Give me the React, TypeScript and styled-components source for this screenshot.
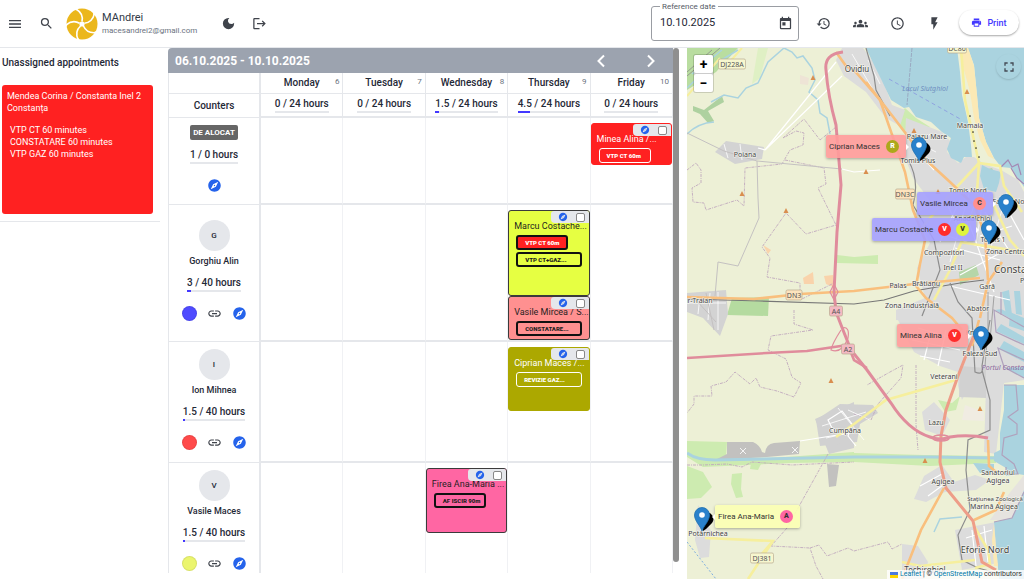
import React from 'react';
import styled, { createGlobalStyle } from 'styled-components';
import {
  MdMenu, MdSearch, MdLogout, MdToday, MdHistory, MdGroups, MdAccessTime, MdDarkMode,
  MdFlashOn, MdPrint, MdExplore, MdLink, MdFullscreen,
} from 'react-icons/md';

const ink = '#1f2937';
const line = '#e5e7eb';
const blue = '#2563eb';
const indigo = '#4338ff';

const GlobalStyle = createGlobalStyle`
  *, *::before, *::after { box-sizing: border-box; }
  body { margin: 0; background: #fff; color: ${ink}; font-family: Roboto, "Liberation Sans", sans-serif; overflow: hidden; }
  button, input { font: inherit; color: inherit; }
  h1, h2, h3, p, ul { margin: 0; padding: 0; font-weight: inherit; font-size: inherit; }
`;

const Page = styled.div`
  display: flex;
  flex-direction: column;
  height: 100vh;
`;

const Header = styled.header`
  display: flex;
  align-items: center;
  justify-content: space-between;
  flex: 0 0 48px;
  padding: 0 5px 0 7px;
  border-bottom: 1px solid ${line};
`;

const Group = styled.div<{ $gap: number }>`
  display: flex;
  align-items: center;
  gap: ${p => p.$gap}px;
`;

const IconButton = styled.button<{ $size?: number; $color?: string }>`
  display: inline-flex;
  align-items: center;
  justify-content: center;
  padding: 0;
  border: 0;
  background: none;
  color: ${p => p.$color ?? '#3f434b'};
  font-size: ${p => p.$size ?? 15}px;
  line-height: 1;
`;

const Account = styled.div`
  display: flex;
  align-items: center;
  gap: 4px;
  width: 140px;
`;

const AccountName = styled.p`
  font-size: 11px;
  line-height: 14px;
  color: #333b47;
`;

const AccountMail = styled.p`
  font-size: 8px;
  line-height: 11px;
  color: #6b7280;
`;

const DateField = styled.fieldset`
  display: flex;
  align-items: center;
  width: 148px;
  min-width: 0;
  height: 39px;
  margin: 0 0 4px;
  padding: 0 5px 5px 8px;
  border: 1px solid #9a9da3;
  border-radius: 3px;

  legend {
    padding: 0 2px;
    font-size: 8px;
    line-height: 9px;
    color: #555b66;
  }
`;

const DateInput = styled.input`
  flex: 1;
  width: 100%;
  min-width: 0;
  padding: 0;
  border: 0;
  outline: 0;
  background: none;
  font-size: 11px;
  line-height: 14px;
`;

const DateBody = styled.div`
  display: flex;
  align-items: center;
  width: 100%;
`;

const PrintButton = styled.button`
  display: flex;
  align-items: center;
  justify-content: center;
  gap: 5px;
  width: 60px;
  height: 25px;
  margin-bottom: 2px;
  padding: 0;
  border: 0;
  border-radius: 13px;
  background: #fff;
  box-shadow: 0 1px 2px rgba(0, 0, 0, .35);
  color: ${indigo};
  font-size: 9px;
  font-weight: 500;

  svg { font-size: 11px; }
`;

const Main = styled.main`
  display: grid;
  grid-template-columns: 160px minmax(0, 511fr) minmax(0, 337fr);
  column-gap: 8px;
  flex: 1;
  min-height: 0;
`;

const Sidebar = styled.aside`
  align-self: start;
  padding: 8px 7px 7px 2px;
  border-bottom: 1px solid ${line};
`;

const SidebarTitle = styled.h2`
  margin-bottom: 16px;
  font-size: 10px;
  font-weight: 500;
  line-height: 13px;
`;

const PendingCard = styled.article`
  min-height: 129px;
  padding: 5px;
  border-radius: 3px;
  background: #ff2121;
  color: #fff;
  font-size: 9px;
  line-height: 12px;

  ul { margin: 10px 0 0 3px; list-style: none; }
`;

const Scheduler = styled.section`
  position: relative;
  display: flex;
  flex-direction: column;
  min-height: 0;
  margin-bottom: 6px;
  padding-right: 6px;
  overflow: hidden;
`;

const ScrollThumb = styled.div`
  position: absolute;
  top: 0;
  right: 0;
  bottom: 11px;
  width: 6px;
  border-radius: 3px;
  background: #8f8f8f;
`;

const RangeBar = styled.div`
  display: flex;
  align-items: center;
  justify-content: space-between;
  flex: 0 0 25px;
  padding: 0 15px 0 7px;
  border-radius: 4px 0 0 0;
  background: #9ca3af;
  color: #fff;
  font-size: 12px;
  font-weight: 700;
`;

const Table = styled.table`
  width: 100%;
  border-spacing: 0;
  table-layout: fixed;
  border-left: 1px solid ${line};
`;

const Corner = styled.th<{ $height: number }>`
  width: 92px;
  height: ${p => p.$height}px;
  padding: 0;
  border-right: 2px solid ${line};
  border-bottom: 1px solid ${line};
  font-size: 10px;
  font-weight: 500;
`;

const DayHead = styled.th`
  padding: 0;
  border-right: 1px solid ${line};
  border-bottom: 1px solid ${line};
  font-size: 10px;
  font-weight: 500;

  div { position: relative; line-height: 18px; }
  span { position: absolute; top: -1px; right: 3px; font-size: 8px; font-weight: 400; color: #6b7280; }
`;

const TotalCell = styled.td`
  padding: 0;
  border-right: 1px solid ${line};
  border-bottom: 2px solid ${line};
`;

const RowHead = styled.th<{ $height: number }>`
  height: ${p => p.$height}px;
  padding: 0 0 5px;
  border-right: 2px solid ${line};
  border-bottom: 1px solid ${line};
  font-weight: 500;
`;

const Slot = styled.td`
  padding: 5px 0 0;
  border-right: 1px solid #f0f1f4;
  border-bottom: 2px solid ${line};
  vertical-align: top;
`;

const Stack = styled.div`
  display: flex;
  flex-direction: column;
  align-items: center;
`;

const HoursBox = styled.div`
  width: fit-content;
  margin: 0 auto;
  font-size: 10px;
  font-weight: 500;
  line-height: 13px;
`;

const Track = styled.div`
  height: 2px;
  margin-top: 1px;
  background: ${line};
`;

const Fill = styled.div`
  height: 2px;
  background: ${indigo};
`;

const Badge = styled.span`
  padding: 0 3px;
  margin-bottom: 8px;
  border-radius: 2px;
  background: #666;
  color: #fff;
  font-size: 8px;
  font-weight: 700;
  line-height: 15px;
`;

const Avatar = styled.span`
  display: flex;
  align-items: center;
  justify-content: center;
  width: 31px;
  height: 31px;
  margin-bottom: 4px;
  border-radius: 50%;
  background: ${line};
  font-size: 8px;
`;

const WorkerName = styled.span`
  margin-bottom: 9px;
  font-size: 9px;
  line-height: 12px;
`;

const Actions = styled.div`
  display: flex;
  align-items: center;
  justify-content: center;
  gap: 10px;
  margin-top: 14px;
`;

const Swatch = styled.button<{ $color: string }>`
  width: 15px;
  height: 15px;
  padding: 0;
  border: 1px solid rgba(0, 0, 0, .08);
  border-radius: 50%;
  background: ${p => p.$color};
`;

const Event = styled.article<{ $bg: string; $height: number; $light?: boolean }>`
  position: relative;
  height: ${p => p.$height}px;
  padding: 9px 4px 0 5px;
  border: 1px solid ${p => (p.$light ? p.$bg : '#3b3b3b')};
  border-radius: 3px;
  background: ${p => p.$bg};
  color: ${p => (p.$light ? '#fff' : '#1f1f1f')};
`;

const EventTools = styled.div`
  position: absolute;
  top: 0;
  right: 0;
  display: flex;
  align-items: center;
  justify-content: flex-end;
  gap: 8px;
  width: 38px;
  height: 12px;
  padding-right: 4px;
  border-radius: 3px 2px 0 4px;
  background: ${line};
`;

const Tick = styled.input`
  appearance: none;
  width: 9px;
  height: 9px;
  margin: 0;
  border: 1px solid #888;
  border-radius: 2px;
  background: #fff;
`;

const EventTitle = styled.h3`
  margin-bottom: 3px;
  font-size: 9px;
  line-height: 12px;
  white-space: nowrap;
`;

const Tag = styled.div<{ $light?: boolean; $bg?: string; $wide?: boolean }>`
  width: ${p => (p.$wide ? 66 : 52)}px;
  margin: 0 0 2px 2px;
  padding-left: 7px;
  border: ${p => (p.$light ? '1px solid #fff' : '2px solid #111')};
  border-radius: 3px;
  background: ${p => p.$bg ?? 'transparent'};
  color: ${p => (p.$bg ? '#fff' : 'inherit')};
  font-size: 6px;
  font-weight: 900;
  line-height: ${p => (p.$light ? 13 : 11)}px;
  white-space: nowrap;
`;

const MapPanel = styled.section`
  position: relative;
  overflow: hidden;
  background: #edf0d6;
`;

const MapArt = styled.svg`
  position: absolute;
  inset: 0;
  width: 100%;
  height: 100%;
`;

const Pin = styled.div<{ $x: number; $y: number }>`
  position: absolute;
  left: ${p => p.$x}px;
  top: ${p => p.$y}px;
  width: 0;
  height: 0;

  > svg { position: absolute; left: -8px; bottom: 0; }
`;

const PinLabel = styled.div<{ $bg: string; $right?: boolean; $width: number }>`
  position: absolute;
  top: -27px;
  ${p => (p.$right ? 'left' : 'right')}: 13px;
  display: flex;
  align-items: center;
  justify-content: space-between;
  width: ${p => p.$width}px;
  height: 23px;
  padding: 0 7px 0 3px;
  border-radius: 2px;
  background: ${p => p.$bg};
  box-shadow: 0 1px 3px rgba(0, 0, 0, .3);
  color: #333;
  font-size: 8px;
  white-space: nowrap;

  &::after {
    content: '';
    position: absolute;
    top: 9px;
    ${p => (p.$right ? 'right' : 'left')}: 100%;
    border: 3px solid transparent;
    border-${p => (p.$right ? 'right' : 'left')}-color: #fff;
  }
`;

const Dots = styled.span`
  display: flex;
  gap: 5px;
`;

const Dot = styled.span<{ $bg: string; $fg?: string }>`
  width: 13px;
  border-radius: 50%;
  background: ${p => p.$bg};
  color: ${p => p.$fg ?? '#fff'};
  font-size: 7px;
  font-weight: 900;
  line-height: 13px;
  text-align: center;
`;

const ZoomControl = styled.div`
  position: absolute;
  top: 7px;
  left: 7px;
  display: flex;
  flex-direction: column;
  gap: 1px;
  border-radius: 2px;
  background: #ccc;
  box-shadow: 0 0 0 1px rgba(0, 0, 0, .15);

  button {
    width: 19px;
    height: 18px;
    padding: 0;
    border: 0;
    border-radius: 2px;
    background: #fff;
    color: #000;
    font-size: 14px;
    font-weight: 700;
    line-height: 18px;
  }
`;

const FullscreenButton = styled.button`
  position: absolute;
  top: 6px;
  right: 3px;
  display: flex;
  align-items: center;
  justify-content: center;
  width: 25px;
  height: 25px;
  padding: 0;
  border: 0;
  border-radius: 50%;
  background: #aad3df;
  box-shadow: 0 1px 2px rgba(0, 0, 0, .15);
  color: #444b55;
  font-size: 16px;
`;

const Attribution = styled.p`
  position: absolute;
  right: 0;
  bottom: 0;
  display: flex;
  align-items: center;
  gap: 2px;
  padding: 0 2px 0 3px;
  background: rgba(255, 255, 255, .8);
  color: #333;
  font-size: 7px;
  line-height: 9px;
  white-space: nowrap;

  a { color: #0078a8; text-decoration: none; }
`;

const Logo = () => (
  <svg width="32" height="32" viewBox="-16 -16 32 32" aria-hidden="true">
    <circle r="15.5" fill="#ebb71c" />
    <circle r="2.600" fill="#fff" />
    {[0, 72, 144, 216, 288].map(a => (
      <g key={a} transform={`rotate(${a})`}>
        <path d="M0-2.500C1-7-1-12-6-15" fill="none" stroke="#fff" strokeWidth="1.600" />
        <path d="M-5-16.500L-9-15L-5.500-14.200Z" fill="#fff" stroke="#fff" />
      </g>
    ))}
  </svg>
);

const Chevron = ({ forward }: { forward?: boolean }) => (
  <svg width="14" height="14" viewBox="0 0 14 14" aria-hidden="true">
    <path d={forward ? 'M4 1.500L9.500 7L4 12.500' : 'M10 1.500L4.500 7L10 12.500'} fill="none" stroke="currentColor" strokeWidth="2" />
  </svg>
);

const Hours = ({ text, share }: { text: string; share: number }) => (
  <HoursBox>
    {text}
    <Track><Fill style={{ width: `${share}%` }} /></Track>
  </HoursBox>
);

type Job = { label: string; bg?: string; wide?: boolean };
type Appt = { id: string; title: string; bg: string; height: number; light?: boolean; jobs: Job[] };

const Appointment = ({ a }: { a: Appt }) => (
  <Event $bg={a.bg} $height={a.height} $light={a.light}>
    <EventTitle>{a.title}</EventTitle>
    {a.jobs.map(j => (
      <Tag key={j.label} $light={a.light} $bg={j.bg} $wide={j.wide}>{j.label}</Tag>
    ))}
    <EventTools>
      <IconButton $size={10} $color={blue} aria-label={`Locate ${a.id}`}><MdExplore /></IconButton>
      <Tick type="checkbox" aria-label={`Select ${a.id}`} />
    </EventTools>
  </Event>
);

const days = [
  { name: 'Monday', n: 6, total: '0 / 24 hours', share: 0 },
  { name: 'Tuesday', n: 7, total: '0 / 24 hours', share: 0 },
  { name: 'Wednesday', n: 8, total: '1.5 / 24 hours', share: 6 },
  { name: 'Thursday', n: 9, total: '4.5 / 24 hours', share: 19 },
  { name: 'Friday', n: 10, total: '0 / 24 hours', share: 0 },
];

const workers: { name?: string; total: string; share: number; color?: string; height: number; slots: Record<number, Appt[]> }[] = [
  {
    total: '1 / 0 hours', share: 0, height: 87,
    slots: { 4: [{ id: 'Minea Alina', title: 'Minea Alina /...', bg: '#ff2121', height: 42, light: true, jobs: [{ label: 'VTP CT 60m' }] }] },
  },
  {
    name: 'Gorghiu Alin', total: '3 / 40 hours', share: 8, color: '#4f4bff', height: 137,
    slots: {
      3: [
        { id: 'Marcu Costache', title: 'Marcu Costache...', bg: '#e6ff42', height: 86, jobs: [{ label: 'VTP CT 60m', bg: '#ff2121' }, { label: 'VTP CT+GAZ...', wide: true }] },
        { id: 'Vasile Mircea', title: 'Vasile Mircea / S...', bg: '#ff9090', height: 44, jobs: [{ label: 'CONSTATARE...', wide: true }] },
      ],
    },
  },
  {
    name: 'Ion Mihnea', total: '1.5 / 40 hours', share: 4, color: '#ff4a4a', height: 121,
    slots: { 3: [{ id: 'Ciprian Maces', title: 'Ciprian Maces /...', bg: '#aca800', height: 64, light: true, jobs: [{ label: 'REVIZIE GAZ...', wide: true }] }] },
  },
  {
    name: 'Vasile Maces', total: '1.5 / 40 hours', share: 4, color: '#ebf56e', height: 121,
    slots: { 2: [{ id: 'Firea Ana-Maria', title: 'Firea Ana-Maria ...', bg: '#ff66a3', height: 65, jobs: [{ label: 'AF ISCIR 90m' }] }] },
  },
];

const places: [string, number, number, number][] = [
  ['Ovidiu', 857, 72, 8], ['Poiana', 745, 157, 7], ['Mamaia', 970, 128, 7], ['Palazu Mare', 927, 139, 7],
  ['Tomis Plus', 918, 163, 7], ['Tomis Nord', 968, 193, 7], ['Faleza Nord', 1012, 204, 7], ['Anadalchioi', 973, 221, 7],
  ['Tomis 1', 993, 242, 7], ['Zona Centrala', 1009, 254, 7], ['Compozitori', 944, 255, 7], ['Inel II', 953, 270, 7],
  ['Constanța', 1018, 273, 10], ['Palas', 898, 288, 7], ['Brătianu', 926, 286, 7], ['Gară', 987, 289, 7],
  ['Zona Industrială', 912, 308, 7], ['Abator', 978, 311, 7], ['Port', 1027, 283, 7], ['Valur-Traian', 693, 303, 7],
  ['Km 5', 974, 335, 7], ['Faleza Sud', 980, 356, 7], ['Veterani', 944, 379, 7], ['Cumpăna', 845, 433, 7],
  ['Lazu', 936, 425, 7], ['Agigea', 943, 484, 7], ['Sanatoriul', 998, 475, 7], ['Agigea', 998, 483, 7],
  ['Stațiunea Zoologică', 995, 501, 6], ['Marină Agigea', 994, 509, 7], ['Eforie Nord', 985, 553, 9],
  ['Techirghiol', 925, 573, 8], ['Potârnichea', 708, 536, 7],
];

const shields: [string, number, number, number, string][] = [
  ['DJ228A', 732, 64, 27, '#f7f7cf'], ['DN3', 794, 295, 16, '#fde3bd'], ['DN3C', 905, 194, 19, '#fde3bd'],
  ['A4', 836, 311, 13, '#f3b8c2'], ['A2', 848, 349, 13, '#f3b8c2'], ['DJ381', 762, 558, 23, '#f7f7cf'], ['DC86', 957, 48, 19, '#f7f7cf'],
];

const peaks = [[813, 78], [742, 194], [786, 211], [967, 92], [866, 172], [914, 131], [831, 381], [925, 461], [980, 409], [938, 192]];

const MapDrawing = () => (
  <MapArt viewBox="687 48 337 531" preserveAspectRatio="xMinYMin slice" aria-hidden="true">
    {/* woods and meadows */}
    <g fill="#cdebb0">
      <path d="M687 48H738L716 72L687 90Z" fill="#b9dda0" />
      <path d="M693 106L704 110L722 96L724 102L708 111L714 121L708 123L700 114L693 111Z" fill="#aed1a0" />
      <path d="M687 441L727 442L726 458L746 460L854 452V462L790 463L703 467L687 457Z" />
      <path d="M687 466L703 472L712 487L701 498L687 499Z" />
      <path d="M732 474L742 473L741 489L743 497L736 498L731 484Z" />
      <path d="M751 463L761 464L758 470L750 469Z" />
      <path d="M837 255L854 257L878 255V264L837 263Z" />
      <path d="M732 298L769 297L768 316L727 315Z" fill="#b5dba0" />
      <path d="M854 453L924 455L996 456V463L930 466L854 462Z" />
      <path d="M894 120L905 108L916 118L930 127L924 133L902 130Z" />
      <path d="M938 400L952 403L960 396L956 410L945 412Z" />
      <path d="M758 48L768 48L760 78L752 84Z" fill="#dff0c4" />
    </g>
    {/* built-up ground */}
    <g fill="#dcdcdc">
      <path d="M715 152L726 141L764 147L762 159L735 164Z" fill="#d3d3d3" />
      <path d="M687 293L726 290L728 314L720 336L703 318L687 312Z" fill="#d3d3d3" />
      <path d="M842 48H863L879 70L892 105L905 110L900 126L886 118L866 92L844 76L836 60Z" />
      <path d="M906 118L942 132L951 142L947 152L958 163L966 157H974L984 164L1001 170L1018 180L1024 192V340H952L928 322L896 320L896 310L925 298L917 268L930 243L915 213L934 206L913 178L904 155Z" />
      <path d="M898 320L984 320L1024 326V380L1004 383L996 454L984 452L986 386L970 385L962 400L958 386L958 372L940 366L914 352Z" />
      <path d="M922 412L934 402L950 420L942 436L925 430Z" />
      <path d="M815 419L854 402V448L829 454Z" fill="#d1d1d1" />
      <path d="M840 404L873 405L878 413L860 424L857 442L820 446L816 420Z" fill="#d1d1d1" />
      <path d="M924 476L942 465L954 482L975 475L990 480L976 490L945 492L926 502L914 499Z" />
      <path d="M955 530L996 522L998 563L962 570Z" />
      <path d="M902 544L918 546L928 562L924 579H902Z" />
      <path d="M698 505L711 531L709 557L700 558L695 540Z" />
      <path d="M1004 500L1024 475V500L1012 520L990 520Z" fill="#e6e3df" />
      <path d="M960 366L986 368V398L959 397Z" fill="#d1d1d1" />
    </g>
    <path d="M959 272L976 265L979 275L960 285ZM984 170L992 168L996 176L988 184Z" fill="#b5d6a8" />
    <g fill="#c2c1bf">
      <path d="M727 442L753 442Q760 445 762 452L765 453Q766 444 774 443L800 441L799 454L767 457L715 460L727 454Z" />
      <path d="M827 464L839 465L836 486L829 487Z" />
    </g>
    <g fill="#f3e1c4">
      <path d="M803 278L813 272L814 284L804 284Z" fill="#f9d3ab" />
      <path d="M824 276L833 275V287L826 284Z" fill="#f9d3ab" />
      <path d="M763 245L771 250L768 254Z" fill="#f9d3ab" />
      <path d="M800 75L809 78L808 85L800 84Z" fill="#eee4d6" />
      <path d="M965 405L984 412V421L962 420Z" fill="#f0ece2" />
    </g>
    {/* sea, lakes and harbour */}
    <g fill="#aad3df">
      <path d="M866 48L874 65L882 81L891 100L904 108L909 107L916 117L931 122L942 132L951 138L947 149L951 158L961 163L964 157H972L971 145L968 122L962 95L960 72L957 48Z" />
      <path d="M968 48L974 65L977 95L979 118L986 142L994 158L1001 167L1011 168L1017 177L1024 187V48Z" />
      <path d="M982 165L990 169L1001 172L999 183L996 192L984 189L980 176Z" />
      <path d="M1004 385H1024V475L1018 474L1006 476V468L994 461V453L1000 450V433L1004 410Z" />
      <path d="M1024 490L1012 518L994 522L996 545L999 579H1024Z" />
      <path d="M973 463L994 464V472L980 473Z" />
      <path d="M995 310L1024 326V320L1001 309ZM996 331L1024 344V337L1001 324ZM999 349L1024 362V352L1004 341ZM1005 368L1024 378V367Z" />
      <path d="M1002 292L1009 290L1012 315L1006 315ZM1014 291H1020L1022 315L1016 314Z" />
      <path d="M1009 326L1024 331V318L1010 312Z" />
    </g>
    <g fill="none" stroke="#b0a2bd" strokeWidth="1.200">
      <path d="M1004 385H1016L1018 410L1008 417L1017 424V434L1004 438L1002 455L1014 464L1018 474H1006V467" />
      <path d="M1001 167L1008 160L1012 167L1018 164L1021 175M1011 168L1017 178L1024 184" stroke="#a489b5" />
      <path d="M1024 378L1004 367L998 348L1024 360M1024 345L996 332L994 310L1024 327M1001 292V315" />
      <path d="M994 522L1012 518L1024 492" />
    </g>
    <path d="M958 48H968L974 66L977 95L979 118L986 142L994 159L988 156L980 140L974 118L970 92Z" fill="#fbe9b5" />
    <path d="M994 524L996 548L998 566L994 566L992 540Z" fill="#fbe9b5" />
    <g fill="none" stroke="#aad3df">
      <path d="M687 453Q696 460 715 460L854 457L931 457L994 458" strokeWidth="3" />
      <path d="M711 102L724 95L738 98L746 88L758 83L768 62L784 48L792 52L797 58L803 56L812 68L815 80L809 92L818 100L820 113L827 118L830 134" strokeWidth="1.500" />
      <path d="M687 134Q698 123 714 122" strokeWidth="1.500" />
      <path d="M934 532L940 519L962 517" strokeWidth="1.500" />
      <path d="M687 88L708 68L738 50M692 74L722 50" strokeWidth="1.500" />
    </g>
    {/* parish borders and tracks */}
    <g fill="none" stroke="#bfa8bd" strokeWidth=".9" strokeDasharray="3 1 1 1">
      <path d="M687 170L696 163L701 170V183L692 188L693 202L704 203L706 210L737 200L744 206L745 168L782 164L790 150L803 145L804 133L796 131L783 138" />
      <path d="M785 160L824 168L826 184L818 188L836 225L806 234L786 213L762 247L770 258L767 277L800 283V300L836 282" />
      <path d="M783 138L804 119L820 140L836 127" />
      <path d="M794 310V324L813 330L771 336L768 350L786 359L792 377L801 383L794 397L777 391L760 387L756 378L750 384L735 372L726 382L711 386L712 396H694V404L687 413" />
      <path d="M828 454L787 528L771 546L810 548L816 566L823 579M810 548L819 545L827 556L848 548L854 551" />
      <path d="M687 465L703 465L727 464L742 467L752 462L792 465L854 462" />
      <path d="M854 414L871 420L878 404L901 378L903 365L890 372L867 385M916 365V425L918 450" />
      <path d="M854 551L888 542L892 549L902 544" />
    </g>
    <path d="M889 79L962 120" stroke="#8c9de0" strokeWidth=".9" strokeDasharray="4 3" />
    <path d="M687 542L716 579" stroke="#7eaee0" strokeDasharray="2 2" />
    <path d="M912 48L907 105" stroke="#9298b5" strokeWidth=".7" strokeDasharray="4 1" />
    {/* street grid */}
    <g fill="none" stroke="#fff" strokeWidth="1.200">
      <path d="M836 62L765 150L842 76M842 169L854 172L880 170M758 148L765 150M800 441L850 433M834 432L828 420L842 411L852 424L848 436L856 446" />
      <path d="M940 242L960 200M948 206L964 240M925 160L934 170M968 220L994 292M955 248L1000 260M985 212L1010 252M1000 196L1024 240M960 275L1002 252M976 200L964 236M936 232L990 250M980 236L1012 226M950 286L1010 300M912 340L960 350M918 328L960 340M920 356L950 362M930 336L924 360M946 330L938 366M966 538L992 530M964 552H994M972 530L976 566M984 526L988 562M920 486L942 474M928 496L950 480" />
      <path d="M970 190L950 262M984 192L976 244M1008 190L990 250M920 144L936 152M916 150L930 134M868 60L880 84M852 54L872 88M848 410L870 420M838 408L864 440M822 426L866 412M826 438L862 430M700 296L698 314M710 293L708 320M718 292V330M687 303H726M724 144L728 158M740 144L742 160" strokeWidth=".8" />
    </g>
    <g fill="none" stroke="#c4c1c1" strokeWidth="1">
      <path d="M687 133L724 151L757 161L758 198L759 218L738 266L718 262L715 296M757 161L842 169" />
      <path d="M700 298H726M706 293L714 330M696 300L716 322" />
    </g>
    {/* railways */}
    <g fill="none" stroke="#8c8c8c" strokeWidth="1.200">
      <path d="M687 299L760 301L854 304L884 300L914 291L960 283L984 280" stroke="#777" />
      <path d="M866 48L874 76L876 90L890 116M908 160Q920 180 913 205L934 240L940 270L922 316" />
      <path d="M950 283L958 302L972 318L975 372Q984 376 982 366L986 340L990 320M982 370L990 400L990 430L968 440L966 470L970 510L958 535L962 560L978 568L1000 574" />
      <path d="M988 292V330L985 366M994 296L990 340" strokeWidth="1" stroke="#a2a2a2" />
      <path d="M687 72L712 50M687 76L720 48" strokeWidth=".8" />
    </g>
    {/* county and national roads */}
    <g fill="none" stroke="#f6ef9d" strokeWidth="2.600">
      <path d="M961 48L965 100L979 163L1000 166L1004 186L1022 212" />
      <path d="M979 163L952 192L915 236M979 163L976 206L950 270L934 300M990 196L1010 240L1024 256M960 242L1024 252" />
      <path d="M836 437L854 424L886 400L956 380" />
      <path d="M705 538L773 541L748 579M773 541L760 556" />
      <path d="M974 526L988 550L990 564L975 568M902 562L920 566L975 560" />
      <path d="M687 96L720 58M742 48L726 66" strokeWidth="2" />
    </g>
    <g fill="none" stroke="#f9bf7d" strokeWidth="2.600">
      <path d="M687 297L754 299L800 294L854 291L914 284L980 278" />
      <path d="M854 70L880 100L905 172L913 210L925 240L920 264L916 286L926 298L952 318L962 330" />
      <path d="M836 52L846 66L857 72M866 82L894 118L926 160L950 182L975 206L985 236L988 280" />
      <path d="M979 320L972 346M1002 262L988 282L980 318" />
      <path d="M944 488L921 530L902 579" />
      <path d="M988 440L989 466L996 472M1004 492L996 510L974 520" />
    </g>
    <g fill="none" stroke="#ee9d88" strokeWidth="3">
      <path d="M976 330L958 376L946 410L941 436L940 462L946 488L973 521L982 562L996 570" />
    </g>
    {/* motorways */}
    <g fill="none" stroke="#e08c9c">
      <path d="M843 52Q824 54 826 70Q828 96 836 125L841 185L837 232L834 292L836 312" strokeWidth="3" />
      <path d="M836 312L843 330L851 350L867 370L891 403Q908 430 930 437Q940 441 950 437Q968 434 988 438" strokeWidth="3" />
      <path d="M687 358L767 353L807 351L848 345L854 360L867 368" strokeWidth="2.600" />
      <path d="M841 330Q832 344 831 350Q842 354 848 338Q850 326 842 328M834 284L830 292L834 300L838 292Z" strokeWidth="1.200" />
      <ellipse cx="941" cy="438" rx="8" ry="3" strokeWidth="1.500" />
    </g>
    <g fill="#d98e4f">
      {peaks.map(([x, y]) => <path key={`${x}-${y}`} d={`M${x} ${y - 3}l2.500 5h-5z`} />)}
    </g>
    <g stroke="#222" strokeWidth="1.600" strokeLinecap="round">
      <path d="M970 116v.1M973 132v.1M974 141v.1M976 148v.1M979 157v.1" />
    </g>
    <g stroke="#f4f4f4" strokeWidth="1">
      <path d="M740 448l6 6M746 448l-6 6M792 447l6 6M798 447l-6 6" />
    </g>
    <g fontFamily='"Noto Sans", sans-serif' textAnchor="middle">
      <text x="925" y="91" fontSize="7" fontStyle="italic" fill="#6f8fc0">Lacul Siutghiol</text>
      <text x="1008" y="370" fontSize="7" fontStyle="italic" fill="#8d6a9e">Portul Constanța</text>
      <g fill="#444" stroke="#f5f5ee" strokeWidth="1.200" paintOrder="stroke">
        {places.map(([name, x, y, size]) => <text key={`${name}${y}`} x={x} y={y} fontSize={size}>{name}</text>)}
      </g>
      {shields.map(([name, x, y, w, fill]) => (
        <g key={name}>
          <rect x={x - w / 2} y={y - 5} width={w} height="10" rx="1.500" fill={fill} stroke="#b9ab90" strokeWidth=".7" />
          <text x={x} y={y + 3} fontSize="7" fill="#555">{name}</text>
        </g>
      ))}
    </g>
  </MapArt>
);

const PinIcon = () => (
  <svg width="28" height="27" viewBox="-8 -27 28 27" aria-hidden="true">
    <path d="M1-1L4-3L10-9Q13-13 10-17Q8-20 4-19L0-8Z" fill="#000" />
    <path d="M0-1C-1.500-6-7.500-11-7.500-17A7.500 7.500 0 0 1 7.500-17C7.500-11 1.500-6 0-1Z" fill="#2a81cb" stroke="#1d6fae" strokeWidth=".8" />
    <circle cy="-17" r="2.800" fill="#fff" />
  </svg>
);

type Marker = { name: string; x: number; y: number; bg: string; width: number; right?: boolean; dots: [string, string, string?][] };
const markers: Marker[] = [
  { name: 'Ciprian Maces', x: 232, y: 114, bg: 'rgba(255,155,155,.9)', width: 80, dots: [['R', '#aca81a']] },
  { name: 'Vasile Mircea', x: 319, y: 171, bg: 'rgba(164,160,255,.9)', width: 76, dots: [['C', '#ff9090', '#333']] },
  { name: 'Marcu Costache', x: 302, y: 197, bg: 'rgba(164,160,255,.9)', width: 104, dots: [['V', '#ff2c2c'], ['V', '#e0f53c', '#333']] },
  { name: 'Minea Alina', x: 294, y: 303, bg: 'rgba(255,155,155,.9)', width: 71, dots: [['V', '#ff2c2c']] },
  { name: 'Firea Ana-Maria', x: 15, y: 484, bg: 'rgba(251,255,180,.9)', width: 85, right: true, dots: [['A', '#ff66a3', '#333']] },
];

export default function App() {
  return (
    <Page>
      <GlobalStyle />
      <Header>
        <Group $gap={15}>
          <Group $gap={12}>
            <Group $gap={16}>
              <IconButton $size={16} aria-label="Menu"><MdMenu /></IconButton>
              <IconButton aria-label="Search"><MdSearch /></IconButton>
            </Group>
            <Account>
              <Logo />
              <div>
                <AccountName>MAndrei</AccountName>
                <AccountMail>macesandrei2@gmail.com</AccountMail>
              </div>
            </Account>
          </Group>
          <Group $gap={16}>
            <IconButton aria-label="Dark mode"><MdDarkMode /></IconButton>
            <IconButton aria-label="Log out"><MdLogout /></IconButton>
          </Group>
        </Group>
        <Group $gap={17}>
          <DateField>
            <legend><label htmlFor="reference-date">Reference date</label></legend>
            <DateBody>
              <DateInput id="reference-date" defaultValue="10.10.2025" />
              <IconButton aria-label="Choose date"><MdToday /></IconButton>
            </DateBody>
          </DateField>
          <Group $gap={22}>
            <IconButton aria-label="History"><MdHistory /></IconButton>
            <IconButton aria-label="Teams"><MdGroups /></IconButton>
            <IconButton aria-label="Schedule"><MdAccessTime /></IconButton>
            <IconButton aria-label="Quick actions"><MdFlashOn /></IconButton>
          </Group>
          <PrintButton><MdPrint />Print</PrintButton>
        </Group>
      </Header>
      <Main>
        <Sidebar>
          <SidebarTitle>Unassigned appointments</SidebarTitle>
          <PendingCard>
            <h3>Mendea Corina / Constanta Inel 2 Constanța</h3>
            <ul>
              <li>VTP CT 60 minutes</li>
              <li>CONSTATARE 60 minutes</li>
              <li>VTP GAZ 60 minutes</li>
            </ul>
          </PendingCard>
        </Sidebar>
        <Scheduler>
          <RangeBar>
            <h2>06.10.2025 - 10.10.2025</h2>
            <Group $gap={36}>
              <IconButton $color="#fff" aria-label="Previous week"><Chevron /></IconButton>
              <IconButton $color="#fff" aria-label="Next week"><Chevron forward /></IconButton>
            </Group>
          </RangeBar>
          <Table>
            <thead>
              <tr>
                <Corner $height={21} />
                {days.map(d => <DayHead key={d.name} scope="col"><div>{d.name}<span>{d.n}</span></div></DayHead>)}
              </tr>
              <tr>
                <Corner $height={24} scope="row">Counters</Corner>
                {days.map(d => <TotalCell key={d.name}><Hours text={d.total} share={d.share} /></TotalCell>)}
              </tr>
            </thead>
            <tbody>
              {workers.map(w => (
                <tr key={w.name ?? 'pool'}>
                  <RowHead $height={w.height} scope="row">
                    <Stack>
                      {w.name ? <><Avatar>{w.name[0]}</Avatar><WorkerName>{w.name}</WorkerName></> : <Badge>DE ALOCAT</Badge>}
                      <Hours text={w.total} share={w.share} />
                      <Actions>
                        {w.color && <Swatch $color={w.color} aria-label={`Colour of ${w.name}`} />}
                        {w.color && <IconButton aria-label="Copy link"><MdLink /></IconButton>}
                        <IconButton $color={blue} aria-label="Show route"><MdExplore /></IconButton>
                      </Actions>
                    </Stack>
                  </RowHead>
                  {days.map((d, i) => (
                    <Slot key={d.name}>
                      {(w.slots[i] ?? []).map(a => <Appointment key={a.id} a={a} />)}
                    </Slot>
                  ))}
                </tr>
              ))}
            </tbody>
          </Table>
          <ScrollThumb />
        </Scheduler>
        <MapPanel>
          <MapDrawing />
          {markers.map(m => (
            <Pin key={m.name} $x={m.x} $y={m.y}>
              <PinIcon />
              <PinLabel $bg={m.bg} $width={m.width} $right={m.right}>
                {m.name}
                <Dots>{m.dots.map(([t, bg, fg]) => <Dot key={bg} $bg={bg} $fg={fg}>{t}</Dot>)}</Dots>
              </PinLabel>
            </Pin>
          ))}
          <ZoomControl>
            <button aria-label="Zoom in">+</button>
            <button aria-label="Zoom out">−</button>
          </ZoomControl>
          <FullscreenButton aria-label="Full screen"><MdFullscreen /></FullscreenButton>
          <Attribution>
            <svg width="8" height="6" viewBox="0 0 8 6" aria-hidden="true"><path fill="#4c7be1" d="M0 0h8v3H0z" /><path fill="#ffd500" d="M0 3h8v3H0z" /></svg>
            <span><a href="#leaflet">Leaflet</a> | © <a href="#osm">OpenStreetMap</a> contributors</span>
          </Attribution>
        </MapPanel>
      </Main>
    </Page>
  );
}
